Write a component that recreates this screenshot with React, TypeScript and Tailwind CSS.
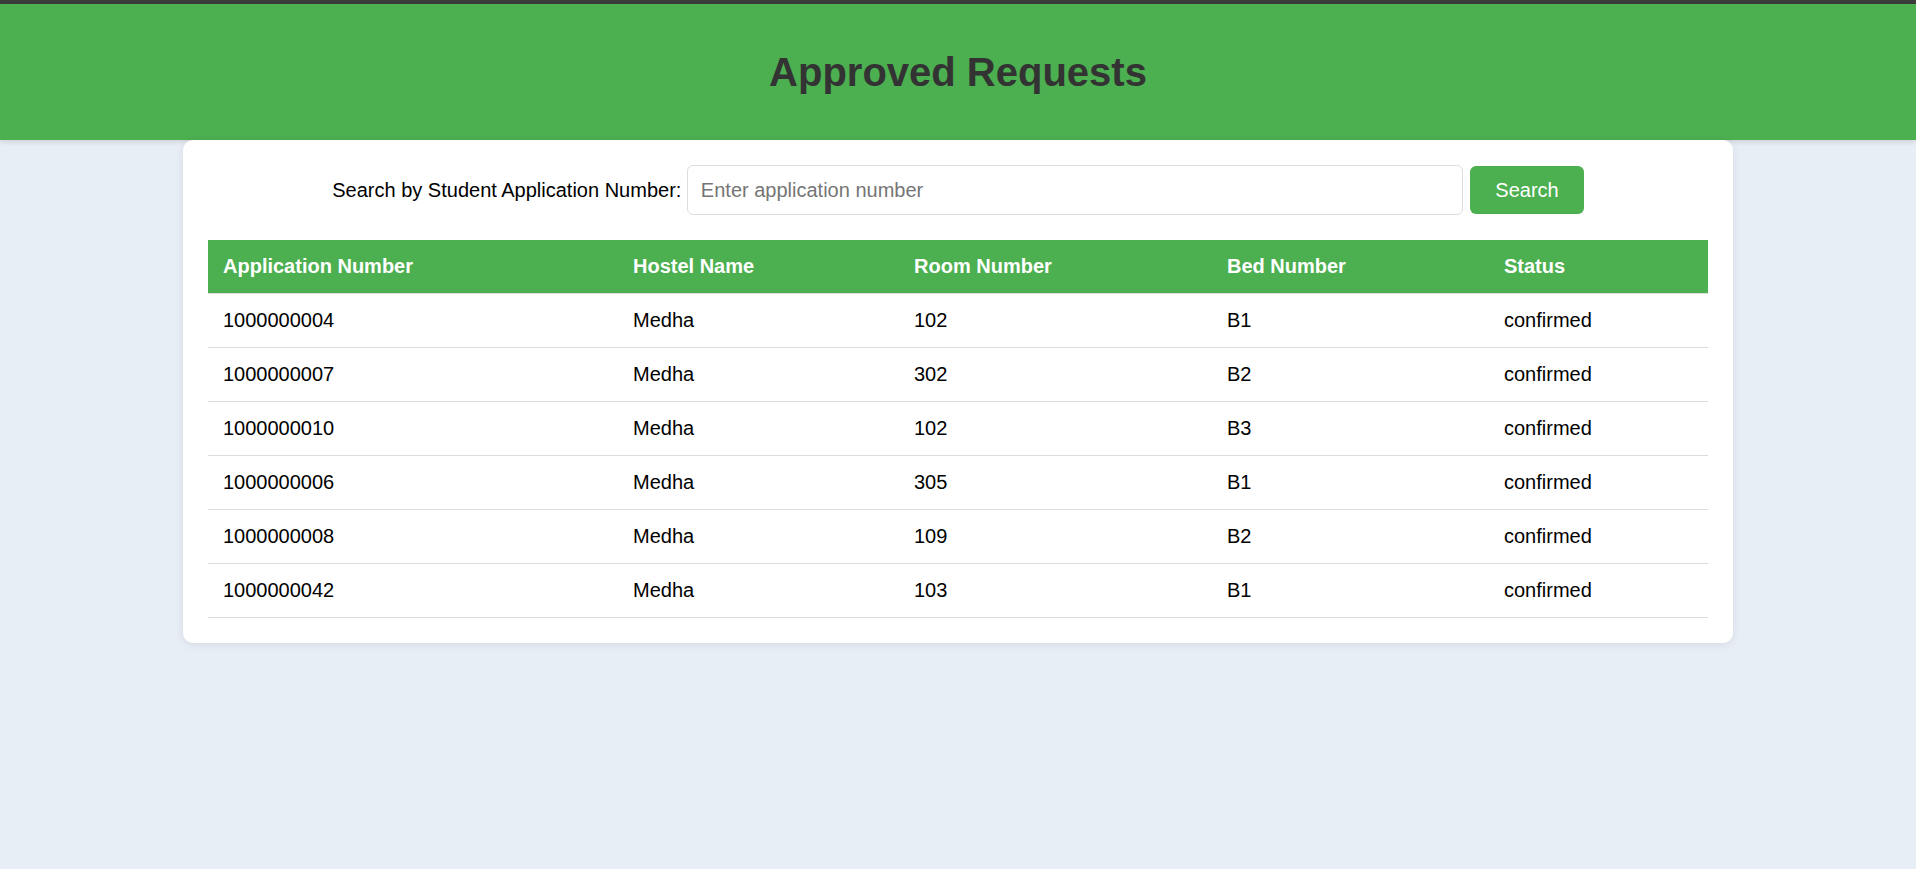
import React from "react";

const rows = [
  ["1000000004", "Medha", "102", "B1", "confirmed"],
  ["1000000007", "Medha", "302", "B2", "confirmed"],
  ["1000000010", "Medha", "102", "B3", "confirmed"],
  ["1000000006", "Medha", "305", "B1", "confirmed"],
  ["1000000008", "Medha", "109", "B2", "confirmed"],
  ["1000000042", "Medha", "103", "B1", "confirmed"],
];

export default function App() {
  return (
    <div className="min-h-screen bg-[#e8eef5] font-['Liberation_Sans',Arial,sans-serif] text-[20px] text-black">
      <div className="h-[4px] bg-[#3b3b3b]" />
      <header className="flex h-[136px] items-center justify-center bg-[#4caf50] shadow-[0_2px_5px_rgba(0,0,0,0.12)]">
        <h1 className="text-[40px] font-bold leading-[46px] text-[#333333]">Approved Requests</h1>
      </header>
      <main className="mx-auto w-[1550px] rounded-[10px] bg-white p-[25px] shadow-[0_2px_10px_rgba(0,0,0,0.08)]">
        <div className="flex items-center justify-center">
          <label className="mr-[6px] leading-[23px]">Search by Student Application Number:</label>
          <input
            type="text"
            placeholder="Enter application number"
            className="h-[50px] w-[776px] rounded-[6px] border border-[#dddddd] px-[12.5px] text-[20px] leading-[23px] outline-none placeholder:text-[#757575]"
          />
          <button className="ml-[7px] h-[48px] rounded-[6px] bg-[#4caf50] px-[25px] text-[20px] leading-[23px] text-white">
            Search
          </button>
        </div>
        <table className="mt-[25px] w-full border-collapse text-left">
          <thead>
            <tr className="bg-[#4caf50] text-white">
              <th className="w-[410px] border-b border-[#dddddd] px-[15px] py-[15px] font-bold leading-[23px]">Application Number</th>
              <th className="w-[281px] border-b border-[#dddddd] px-[15px] py-[15px] font-bold leading-[23px]">Hostel Name</th>
              <th className="w-[313px] border-b border-[#dddddd] px-[15px] py-[15px] font-bold leading-[23px]">Room Number</th>
              <th className="w-[277px] border-b border-[#dddddd] px-[15px] py-[15px] font-bold leading-[23px]">Bed Number</th>
              <th className="border-b border-[#dddddd] px-[15px] py-[15px] font-bold leading-[23px]">Status</th>
            </tr>
          </thead>
          <tbody>
            {rows.map((r) => (
              <tr key={r[0]}>
                {r.map((c, i) => (
                  <td key={i} className="border-b border-[#dddddd] px-[15px] py-[15px] leading-[23px]">
                    {c}
                  </td>
                ))}
              </tr>
            ))}
          </tbody>
        </table>
      </main>
    </div>
  );
}
